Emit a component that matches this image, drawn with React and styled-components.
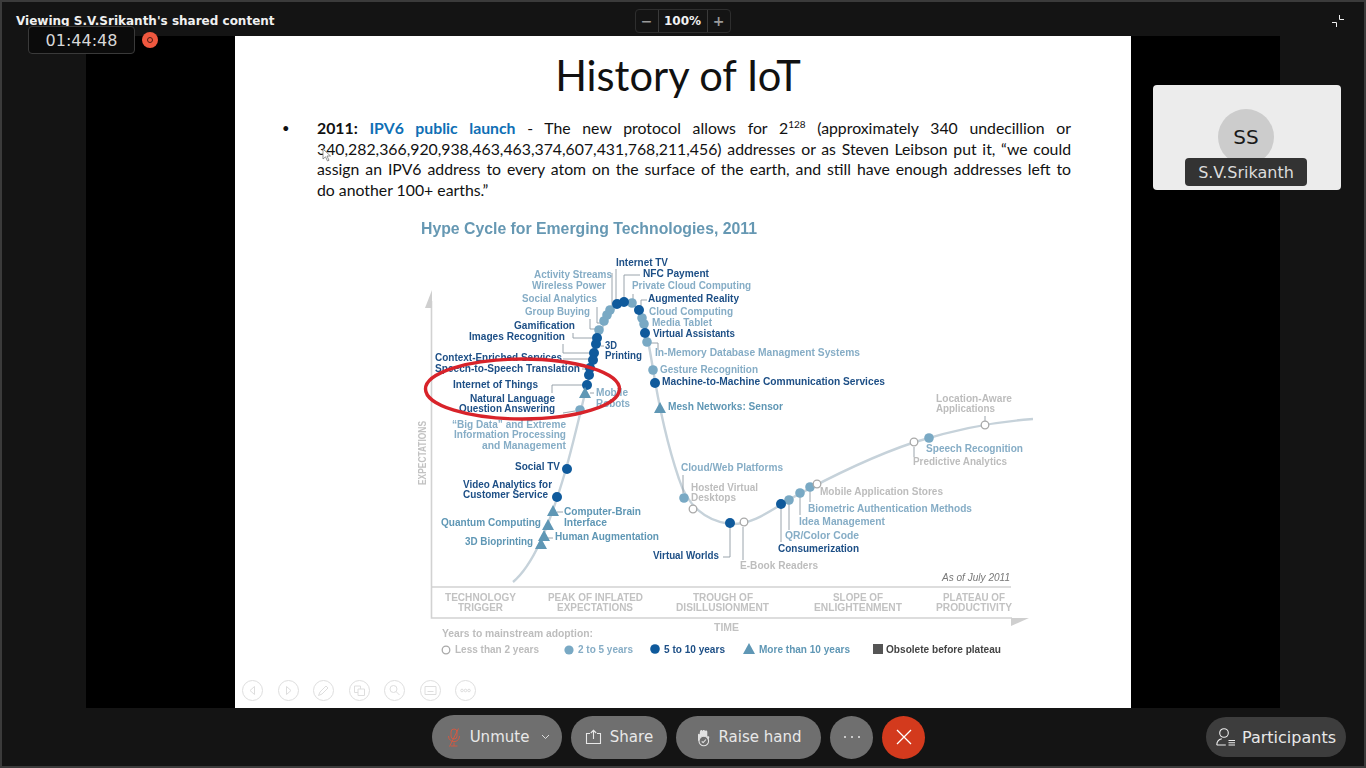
import React from "react";
import styled, { createGlobalStyle } from "styled-components";

const GlobalStyle = createGlobalStyle`
  html, body {
    margin: 0;
    padding: 0;
    height: 100%;
    background: #141414;
    overflow: hidden;
  }
`;

const Window = styled.div`
  box-sizing: border-box;
  position: relative;
  display: flex;
  flex-direction: column;
  width: 1366px;
  height: 768px;
  background: #141414;
  border: 2px solid #3b3b3b;
  font-family: "DejaVu Sans", sans-serif;
  color: #e6e6e6;
`;

const Header = styled.header`
  display: grid;
  grid-template-columns: 1fr auto 1fr;
  align-items: center;
  height: 34px;
  padding: 0 15px 0 14px;
`;

const Title = styled.div`
  font-size: 12px;
  font-weight: 700;
  color: #f0f0f0;
  margin-top: 3px;
`;

const ZoomBox = styled.div`
  display: flex;
  align-items: stretch;
  height: 22px;
  margin-top: 3px;
  border: 1px solid #2e2e2e;
  border-radius: 4px;
`;

const ZoomStep = styled.div`
  display: flex;
  align-items: center;
  justify-content: center;
  width: 22px;
  color: #9a9a9a;
  font-size: 14px;
  font-weight: 700;
`;

const ZoomValue = styled.div`
  display: flex;
  align-items: center;
  justify-content: center;
  width: 48px;
  font-size: 12px;
  font-weight: 700;
  color: #f2f2f2;
  border-left: 1px solid #3a3a3a;
  border-right: 1px solid #3a3a3a;
`;

const CollapseButton = styled.div`
  justify-self: end;
  display: flex;
  margin: 3px 5px 0 0;
`;

const Timer = styled.div`
  position: absolute;
  left: 26px;
  top: 24px;
  box-sizing: border-box;
  width: 107px;
  height: 28px;
  display: flex;
  align-items: center;
  justify-content: center;
  background: #0b0b0b;
  border: 1px solid #3a3a3a;
  border-radius: 4px;
  font-size: 16px;
  color: #d8d8d8;
`;

const RecordDot = styled.div`
  position: absolute;
  left: 140px;
  top: 30px;
  width: 16px;
  height: 16px;
  display: flex;
  align-items: center;
  justify-content: center;
  border-radius: 50%;
  background: #f0583f;

  &::after {
    content: "";
    width: 4px;
    height: 4px;
    border: 1.5px solid #4a1a12;
    border-radius: 50%;
  }
`;

const Stage = styled.main`
  flex: 1;
  display: flex;
  justify-content: center;
  min-height: 0;
`;

const Screen = styled.div`
  display: flex;
  justify-content: center;
  width: 1194px;
  background: #000;
`;

const Slide = styled.section`
  position: relative;
  display: flex;
  flex-direction: column;
  width: 896px;
  background: #fff;
  color: #111;
  font-family: Lato, "Open Sans", sans-serif;
`;

const SlideTitle = styled.h1`
  margin: 0 0 0 -10px;
  height: 78px;
  line-height: 79px;
  text-align: center;
  font-size: 41.6px;
  font-weight: 400;
`;

const Bullet = styled.div`
  position: relative;
  margin: 4px 60px 0 82px;
  font-size: 15.8px;
  line-height: 20.6px;

  &::before {
    content: "•";
    position: absolute;
    left: -35px;
    top: 0;
    font-size: 13px;
  }
`;

const Line = styled.div`
  white-space: nowrap;
  text-align: ${(p) => (p.$last ? "left" : "justify")};
  text-align-last: ${(p) => (p.$last ? "left" : "justify")};
`;

const Accent = styled.b`
  color: #0f6fb5;
`;

const Sup = styled.sup`
  font-size: 10px;
  line-height: 0;
`;

const Chart = styled.svg`
  display: block;
  flex: none;
  margin-top: 11px;
  filter: blur(0.45px);
  font-family: "Liberation Sans", Arial, sans-serif;
`;

const Pointer = styled.svg`
  position: absolute;
  left: 87px;
  top: 112px;
`;

const SlideTools = styled.div`
  position: absolute;
  left: 7px;
  bottom: 7px;
  display: flex;
  gap: 14.5px;
`;

const SlideTool = styled.svg`
  display: block;
  width: 21px;
  height: 21px;
  fill: none;
  stroke: #dedede;
  stroke-width: 1;
`;

const Toolbar = styled.footer`
  display: grid;
  grid-template-columns: 1fr auto 1fr;
  align-items: center;
  height: 58px;
  padding: 0 18px 0 9px;
`;

const Controls = styled.div`
  grid-column: 2;
  display: flex;
  align-items: center;
  gap: 9px;
`;

const Pill = styled.button`
  display: flex;
  align-items: center;
  justify-content: center;
  gap: 8px;
  box-sizing: border-box;
  width: ${(p) => p.$w}px;
  height: 43px;
  padding: 0;
  border: 0;
  border-radius: 22px;
  background: #6f6f6f;
  color: #e8e8e8;
  font-family: "DejaVu Sans", sans-serif;
  font-size: 15px;
`;

const UnmutePill = styled(Pill)`
  height: 44px;
  gap: 9px;
  padding-left: 3px;

  svg:last-child {
    margin-left: 3px;
  }
`;

const RoundButton = styled(Pill)`
  width: 43px;
  background: ${(p) => p.$bg || "#6f6f6f"};
`;

const ParticipantsButton = styled(Pill)`
  justify-self: end;
  grid-column: 3;
  width: 140px;
  height: 40px;
  background: #3d3d3d;
  font-size: 16px;
  gap: 6px;
`;

const Tile = styled.aside`
  position: absolute;
  left: 1151px;
  top: 83px;
  width: 188px;
  height: 105px;
  display: flex;
  justify-content: center;
  background: #ececec;
  border-radius: 4px;
`;

const Avatar = styled.div`
  width: 56px;
  height: 56px;
  margin: 24px 2px 0 0;
  display: flex;
  align-items: center;
  justify-content: center;
  border-radius: 50%;
  background: #cccccc;
  color: #1a1a1a;
  font-size: 20px;
`;

const NameTag = styled.div`
  position: absolute;
  top: 73px;
  left: 32px;
  width: 122px;
  height: 28px;
  display: flex;
  align-items: center;
  justify-content: center;
  background: #333;
  border-radius: 4px;
  color: #dcdcdc;
  font-size: 16px;
`;

const INK = {
  dark: "#1d4f86",
  light: "#86adc6",
  teal: "#5f97b5",
  grey: "#bdbdbd",
  band: "#c2c2c2",
  black: "#444",
};

// text, x, baseline, width, ink
const LABELS = [
  ["Internet TV", 616, 266, 52, "dark"],
  ["NFC Payment", 643, 277, 66, "dark"],
  ["Activity Streams", 534, 278, 78, "light"],
  ["Wireless Power", 532, 289, 74, "light"],
  ["Private Cloud Computing", 632, 289, 119, "light"],
  ["Social Analytics", 522, 302, 75, "light"],
  ["Augmented Reality", 648, 302, 91, "dark"],
  ["Group Buying", 525, 315, 65, "light"],
  ["Cloud Computing", 649, 315, 84, "light"],
  ["Gamification", 514, 329, 61, "dark"],
  ["Media Tablet", 652, 326, 60, "light"],
  ["Images Recognition", 469, 340, 96, "dark"],
  ["Virtual Assistants", 653, 337, 82, "dark"],
  ["3D", 605, 349, 12, "dark"],
  ["Printing", 605, 359, 37, "dark"],
  ["In-Memory Database Managment Systems", 655, 356, 205, "light"],
  ["Context-Enriched Services", 435, 361, 127, "dark"],
  ["Speech-to-Speech Translation", 435, 372, 145, "dark"],
  ["Gesture Recognition", 660, 373, 98, "light"],
  ["Machine-to-Machine Communication Services", 662, 385, 223, "dark"],
  ["Internet of Things", 453, 388, 85, "dark"],
  ["Natural Language", 470, 402, 85, "dark"],
  ["Mobile", 596, 396, 32, "light"],
  ["Robots", 596, 407, 34, "light"],
  ["Question Answering", 459, 412, 96, "dark"],
  ["Mesh Networks: Sensor", 668, 410, 115, "teal"],
  ["Location-Aware", 936, 402, 76, "grey"],
  ["Applications", 936, 412, 59, "grey"],
  ["“Big Data” and Extreme", 452, 428, 114, "light"],
  ["Information Processing", 454, 438, 112, "light"],
  ["and Management", 482, 449, 84, "light"],
  ["Speech Recognition", 926, 452, 97, "light"],
  ["Predictive Analytics", 913, 465, 94, "grey"],
  ["Social TV", 515, 470, 45, "dark"],
  ["Cloud/Web Platforms", 681, 471, 102, "light"],
  ["Hosted Virtual", 691, 491, 67, "grey"],
  ["Desktops", 691, 501, 45, "grey"],
  ["Video Analytics for", 463, 488, 89, "dark"],
  ["Customer Service", 463, 498, 85, "dark"],
  ["Mobile Application Stores", 820, 495, 123, "grey"],
  ["Biometric Authentication Methods", 808, 512, 164, "light"],
  ["Computer-Brain", 564, 515, 77, "teal"],
  ["Interface", 564, 526, 43, "teal"],
  ["Idea Management", 799, 525, 86, "light"],
  ["Quantum Computing", 441, 526, 100, "teal"],
  ["QR/Color Code", 785, 539, 74, "light"],
  ["Human Augmentation", 555, 540, 104, "teal"],
  ["3D Bioprinting", 465, 545, 68, "teal"],
  ["Consumerization", 778, 552, 81, "dark"],
  ["Virtual Worlds", 653, 559, 66, "dark"],
  ["E-Book Readers", 740, 569, 78, "grey"],
  ["TECHNOLOGY", 445, 601, 71, "band"],
  ["TRIGGER", 458, 611, 45, "band"],
  ["PEAK OF INFLATED", 548, 601, 95, "band"],
  ["EXPECTATIONS", 557, 611, 76, "band"],
  ["TROUGH OF", 693, 601, 60, "band"],
  ["DISILLUSIONMENT", 676, 611, 93, "band"],
  ["SLOPE OF", 833, 601, 50, "band"],
  ["ENLIGHTENMENT", 814, 611, 88, "band"],
  ["PLATEAU OF", 943, 601, 62, "band"],
  ["PRODUCTIVITY", 936, 611, 76, "band"],
  ["TIME", 714, 631, 25, "band"],
  ["Years to mainstream adoption:", 442, 637, 151, "grey"],
  ["Less than 2 years", 455, 653, 84, "grey"],
  ["2 to 5 years", 578, 653, 55, "light"],
  ["5 to 10 years", 664, 653, 61, "dark"],
  ["More than 10 years", 759, 653, 91, "teal"],
  ["Obsolete before plateau", 886, 653, 115, "black"],
];

const DARK_DOTS = [
  [617, 303], [624, 301], [639, 309], [645, 332], [655, 382],
  [597, 337], [596, 343], [594, 352], [593, 359], [590, 367], [589, 374], [587, 384],
  [567, 468], [557, 496], [730, 522], [781, 503],
];

const LIGHT_DOTS = [
  [632, 302], [642, 317], [644, 323], [647, 341], [653, 369],
  [599, 329], [604, 320], [607, 314], [610, 309], [580, 409],
  [684, 497], [789, 499], [800, 492], [810, 486], [929, 437],
];

const OPEN_DOTS = [[693, 508], [744, 521], [817, 483], [914, 441], [985, 424]];

const TRIANGLES = [[585, 392], [660, 407], [553, 510], [548, 524], [544, 535], [541, 543]];

const LEADERS = [
  "616,268 616,298", "624,274 640,274", "624,274 624,297", "612,272 612,306",
  "597,306 597,322 602,322", "590,318 590,328 596,328", "573,332 573,337 592,337",
  "563,343 563,352 590,352", "563,358 590,358", "582,368 586,368", "552,392 552,384 583,384",
  "563,412 575,410", "590,392 594,392", "601,345 604,345", "641,305 641,299 647,299",
  "633,293 633,298", "650,342 658,342 658,349", "683,474 683,492", "985,415 985,420",
  "914,446 914,456", "743,526 743,559", "781,507 781,541", "789,503 789,529",
  "800,496 800,514", "810,490 810,501", "730,526 730,556 723,556", "547,537 553,537",
  "557,511 563,511",
];

const triangle = (x, y, s = 6) => `${x - s},${y + 5} ${x + s},${y + 5} ${x},${y - 6}`;

const HypeCycle = () => (
  <Chart width="896" height="498" viewBox="235 210 896 498">
    <text x="421" y="233" fontSize="16.5" fontWeight="700" fill="#6698b3" textLength="336" lengthAdjust="spacingAndGlyphs">
      Hype Cycle for Emerging Technologies, 2011
    </text>

    <g fill="none" stroke="#d2d2d2" strokeWidth="1.6">
      <path d="M431.5 300V617H1012M431.5 586H1011" />
    </g>
    <polygon points="425,307 432,289 432,307" fill="#cfcfcf" />
    <polygon points="1011,617 1029,617 1011,625" fill="#cfcfcf" />

    <path
      d="M513 581C532 565 548 530 566 468C576 432 585 392 593 358C600 326 610 302 627 301C641 301 647 332 652 362C658 400 666 440 679 478C687 504 705 520 730 523C752 524 770 510 790 498C830 476 870 456 915 441C950 430 990 421 1033 418"
      fill="none"
      stroke="#c6d2da"
      strokeWidth="2.4"
    />

    <g fill="none" stroke="#8f9aa3" strokeWidth="0.9">
      {LEADERS.map((points) => (
        <polyline key={points} points={points} />
      ))}
    </g>

    {LIGHT_DOTS.map(([x, y]) => (
      <circle key={`l${x}`} cx={x} cy={y} r="4.8" fill="#79a9c4" />
    ))}
    {DARK_DOTS.map(([x, y]) => (
      <circle key={`d${x}${y}`} cx={x} cy={y} r="5" fill="#0f5a9c" />
    ))}
    {OPEN_DOTS.map(([x, y]) => (
      <circle key={`o${x}`} cx={x} cy={y} r="3.8" fill="#fff" stroke="#a9a9a9" strokeWidth="1.3" />
    ))}
    {TRIANGLES.map(([x, y]) => (
      <polygon key={`t${x}`} points={triangle(x, y)} fill="#5f97b5" />
    ))}

    <g transform="translate(0 -1)">
      {LABELS.map(([label, x, y, w, ink]) => (
        <text key={label + x} x={x} y={y} fontSize="10.5" fontWeight="700" fill={INK[ink]} textLength={w} lengthAdjust="spacingAndGlyphs">
          {label}
        </text>
      ))}
      <text x="942" y="581" fontSize="10.5" fontStyle="italic" fill="#777" textLength="68" lengthAdjust="spacingAndGlyphs">
        As of July 2011
      </text>
    </g>
    <text transform="translate(426 484) rotate(-90)" fontSize="10.5" fontWeight="700" fill="#c2c2c2" textLength="64" lengthAdjust="spacingAndGlyphs">
      EXPECTATIONS
    </text>

    <ellipse cx="522.5" cy="388" rx="97" ry="30" fill="none" stroke="#d8232a" strokeWidth="3.4" />

    <circle cx="446" cy="649" r="3.8" fill="#fff" stroke="#a9a9a9" strokeWidth="1.3" />
    <circle cx="569" cy="649" r="4.6" fill="#79a9c4" />
    <circle cx="655" cy="648" r="4.8" fill="#0f5a9c" />
    <polygon points={triangle(749, 648)} fill="#5f97b5" />
    <rect x="873" y="643" width="10" height="10" fill="#555" />
  </Chart>
);

const ToolIcon = ({ children }) => (
  <SlideTool viewBox="0 0 21 21">
    <circle cx="10.5" cy="10.5" r="10" />
    {children}
  </SlideTool>
);

const SlideToolbar = () => (
  <SlideTools>
    <ToolIcon>
      <path d="M12.5 6.5 8 10.5l4.5 4z" />
    </ToolIcon>
    <ToolIcon>
      <path d="M8.5 6.5 13 10.5l-4.500 4z" />
    </ToolIcon>
    <ToolIcon>
      <path d="M5.500 15.500 7 12l6-6 2 2-6 6z" />
    </ToolIcon>
    <ToolIcon>
      <path d="M5.500 6h6v3M9 9h6.500v6.500H9zM5.500 6v6.500H9" />
    </ToolIcon>
    <ToolIcon>
      <circle cx="9.500" cy="9" r="3.500" />
      <path d="m12 11.500 3.500 3.500" />
    </ToolIcon>
    <ToolIcon>
      <path d="M5 6.500h11v8H5zM7.500 11.500h6" />
    </ToolIcon>
    <ToolIcon>
      <circle cx="7" cy="10.500" r="1.300" />
      <circle cx="10.500" cy="10.500" r="1.300" />
      <circle cx="14" cy="10.500" r="1.300" />
    </ToolIcon>
  </SlideTools>
);

const MicOff = () => (
  <svg width="14" height="19" viewBox="0 0 14 19" fill="none" stroke="#d9583f" strokeWidth="0.9">
    <rect x="4" y="1" width="6" height="10" rx="3" />
    <path d="M1.500 8c0 7.500 11 7.500 11 0M7 14.500V18M3.500 18h7M11.500 .5 2.500 18.500" />
  </svg>
);

const ShareIcon = () => (
  <svg width="17" height="16" viewBox="0 0 17 16" fill="none" stroke="#e8e8e8" strokeWidth="1.1">
    <path d="M5 4.500H1.500v10h14v-10H12M8.500 10V1.500M5.800 4 8.500 1.300 11.200 4" />
  </svg>
);

const HandIcon = () => (
  <svg width="15" height="19" viewBox="0 0 15 19">
    <path d="M2 6.500c0-1 1.500-1 1.700 0 0-3 .5-4.500 1.500-4.500.8 0 1 .6 1 1.200C6.500 1.500 8.800 1.500 9 3c1-.8 2.300-.3 2.300 1v4.500c.7-.5 2-.3 2 .8l-1 3.500H2z" fill="#e2e2e2" />
    <circle cx="7.800" cy="13" r="4.800" fill="#6f6f6f" stroke="#e2e2e2" strokeWidth="1.1" />
    <path d="m5.700 13.500 1.500 1 2.700-3" fill="none" stroke="#e2e2e2" strokeWidth="1.100" />
  </svg>
);

const ParticipantsIcon = () => (
  <svg width="20" height="18" viewBox="0 0 20 18" fill="none" stroke="#f0f0f0" strokeWidth="1.1">
    <circle cx="8" cy="5" r="4.300" />
    <path d="M.8 17c0-3.300 2.300-5.600 5-6.200M.8 17h9M12.500 12.500h6.500M12.500 14.800h6.500M12.500 17h6.500" />
  </svg>
);

const App = () => (
  <>
    <GlobalStyle />
    <Window>
      <Header>
        <Title>Viewing S.V.Srikanth's shared content</Title>
        <ZoomBox>
          <ZoomStep>−</ZoomStep>
          <ZoomValue>100%</ZoomValue>
          <ZoomStep>+</ZoomStep>
        </ZoomBox>
        <CollapseButton>
          <svg width="12" height="12" viewBox="0 0 12 12" fill="none" stroke="#f0f0f0" strokeWidth="1">
            <path d="M7.500 0v4.500H12M0 7.500h4.500V12" />
          </svg>
        </CollapseButton>
      </Header>
      <Timer>01:44:48</Timer>
      <RecordDot />

      <Stage>
        <Screen>
          <Slide>
            <SlideTitle>History of IoT</SlideTitle>
            <Bullet>
              <Line>
                <b>2011:</b> <Accent>IPV6 public launch</Accent> - The new protocol allows for 2<Sup>128</Sup> (approximately 340 undecillion or
              </Line>
              <Line>340,282,366,920,938,463,463,374,607,431,768,211,456) addresses or as Steven Leibson put it, “we could</Line>
              <Line>assign an IPV6 address to every atom on the surface of the earth, and still have enough addresses left to</Line>
              <Line $last>do another 100+ earths.”</Line>
            </Bullet>
            <HypeCycle />
            <Pointer width="10" height="14" viewBox="0 0 10 14">
              <path d="M1 1v10l2.500-2.200L5.500 13l1.500-.7L5 8h3.500z" fill="#fff" stroke="#777" strokeWidth="0.8" />
            </Pointer>
            <SlideToolbar />
          </Slide>
        </Screen>
      </Stage>

      <Tile>
        <Avatar>SS</Avatar>
        <NameTag>S.V.Srikanth</NameTag>
      </Tile>

      <Toolbar>
        <Controls>
          <UnmutePill $w={130}>
            <MicOff />
            Unmute
            <svg width="9" height="6" viewBox="0 0 9 6" fill="none" stroke="#dcdcdc" strokeWidth="1">
              <path d="m1 1 3.500 3.500L8 1" />
            </svg>
          </UnmutePill>
          <Pill $w={96}>
            <ShareIcon />
            Share
          </Pill>
          <Pill $w={145}>
            <HandIcon />
            Raise hand
          </Pill>
          <RoundButton>
            <svg width="18" height="4" viewBox="0 0 18 4" fill="#e8e8e8">
              <circle cx="2" cy="2" r="1" />
              <circle cx="9" cy="2" r="1" />
              <circle cx="16" cy="2" r="1" />
            </svg>
          </RoundButton>
          <RoundButton $bg="#d33a1d">
            <svg width="16" height="16" viewBox="0 0 16 16" stroke="#fff" strokeWidth="1.300">
              <path d="m1 1 14 14M15 1 1 15" />
            </svg>
          </RoundButton>
        </Controls>
        <ParticipantsButton $w={140}>
          <ParticipantsIcon />
          Participants
        </ParticipantsButton>
      </Toolbar>
    </Window>
  </>
);

export default App;
